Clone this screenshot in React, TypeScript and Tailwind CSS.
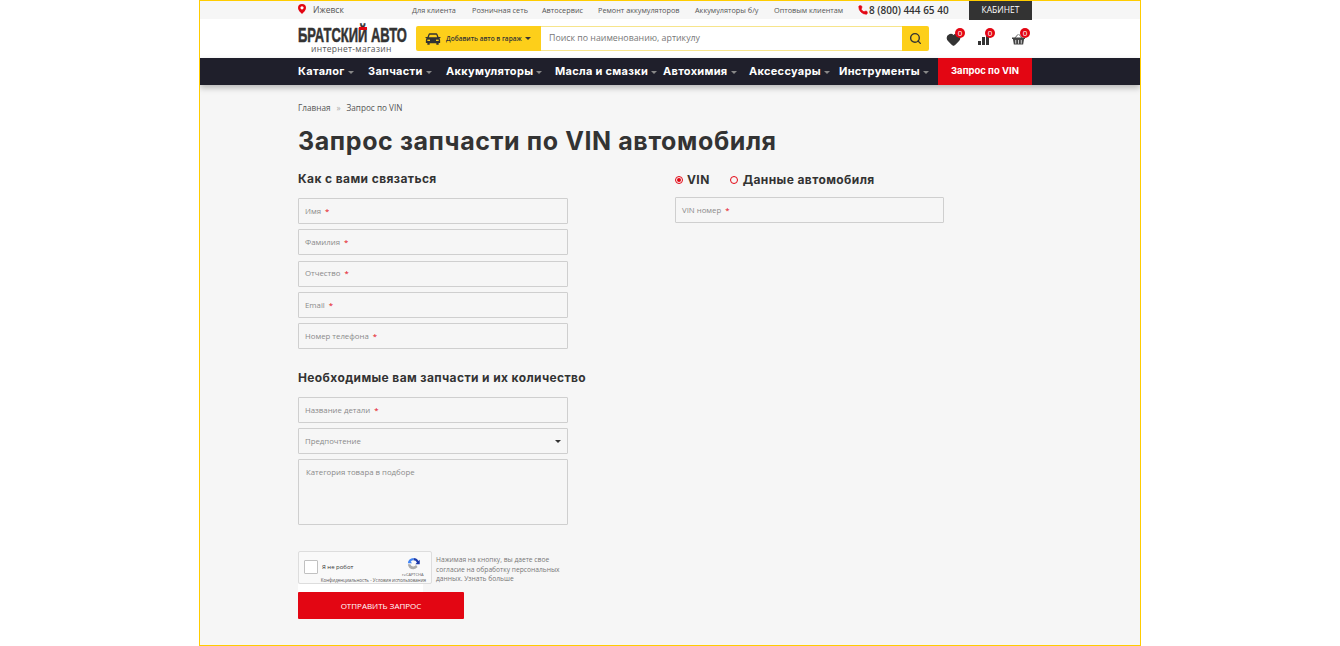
import React from 'react'
import { Phone, Search, Heart } from 'lucide-react'

const heading = "font-['Inter','DejaVu_Sans',sans-serif]"
const body = "font-['Open_Sans','Liberation_Sans',sans-serif]"

const topLinks = [
    { label: 'Для клиента', w: 'w-[60px]' },
    { label: 'Розничная сеть', w: 'w-[70px]' },
    { label: 'Автосервис', w: 'w-[56px]' },
    { label: 'Ремонт аккумуляторов', w: 'w-[97px]' },
    { label: 'Аккумуляторы б/у', w: 'w-[79px]' },
    { label: 'Оптовым клиентам', w: 'w-[84px]' },
]

const navItems = [
    { label: 'Каталог', w: 'w-[70px]' },
    { label: 'Запчасти', w: 'w-[78px]' },
    { label: 'Аккумуляторы', w: 'w-[109px]' },
    { label: 'Масла и смазки', w: 'w-[108px]' },
    { label: 'Автохимия', w: 'w-[86px]' },
    { label: 'Аксессуары', w: 'w-[90px]' },
    { label: 'Инструменты', w: 'w-[99px]' },
]

function Badge() {
    return (
        <span className={`absolute -top-[5px] -right-[5px] flex h-[10px] w-[10px] items-center justify-center rounded-full bg-[#e30613] text-[8px] leading-none text-white ${body}`}>
            0
        </span>
    )
}

function Field({ label, w = 'w-[270px]', mb = 'mb-[5.33px]' }: { label: string; w?: string; mb?: string }) {
    return (
        <div className={`flex h-[26px] items-center rounded-[1px] border border-[#cfcfcf] bg-[#f6f6f6] px-[6px] pt-[1px] text-[7.8px] text-[#8a8a8a] ${w} ${mb}`}>
            {label}
            <span className="ml-[4px] text-[#e30613]">*</span>
        </div>
    )
}

export default function App() {
    return (
        <div className={`mx-auto h-[646px] w-[942px] overflow-hidden border border-[#fc0] bg-[#f6f6f6] ${body}`}>
            <div className="flex h-[18px] items-center bg-[#f6f6f6] pl-[98px] text-[7.3px] text-[#555]">
                <svg viewBox="0 0 8 10" className="-mt-[3px] h-[10px] w-[8px]">
                    <path d="M4 0 A4 4 0 0 1 8 4 C8 6.500 5.300 8.500 4 10 C2.700 8.500 0 6.500 0 4 A4 4 0 0 1 4 0 Z" fill="#e30613" />
                    <circle cx="4" cy="3.800" r="1.600" fill="#fff" />
                </svg>
                <span className="ml-[7px] w-[99px] pt-[1px] text-[8.5px]">Ижевск</span>
                {topLinks.map((l) => (
                    <span key={l.label} className={`whitespace-nowrap pt-[1px] ${l.w}`}>{l.label}</span>
                ))}
                <Phone className="h-[10px] w-[10px] fill-[#e30613] text-[#e30613]" />
                <span className="ml-[1px] w-[100px] whitespace-nowrap pt-[1px] text-[10px] font-semibold text-[#333]">8 (800) 444 65 40</span>
                <div className="flex h-[19px] w-[63px] items-center justify-center bg-[#333] text-[8.5px] text-white">КАБИНЕТ</div>
            </div>

            <div className="flex h-[39px] items-center bg-white pl-[98px]">
                <div className="relative mt-[3px] flex h-[25px] w-[118px] flex-col">
                    <span className="h-[14px] origin-top-left whitespace-nowrap text-[19.5px] font-bold leading-[14px] text-[#333] font-['Liberation_Sans',sans-serif] [-webkit-text-stroke:0.5px_#333] [transform:scaleX(0.665)]">БРАТСКИЙ АВТО</span>
                    <span className="ml-[13px] mt-[3px] whitespace-nowrap text-[8.5px] leading-[8px] tracking-[0.3px] text-[#555]">интернет-магазин</span>
                    <span className="absolute left-[61px] -top-[1px] h-[3px] w-[8px] bg-[#e30613]" />
                </div>
                <div className="flex h-[25px] w-[125px] items-center rounded-l-[2px] bg-[#fdcf1a] pl-[9px]">
                    <svg viewBox="0 0 24 18" className="h-[12px] w-[16px]">
                        <path d="M5 2.500 C5.500 1.200 6.500 0.500 8 0.500 H16 C17.500 0.500 18.500 1.200 19 2.500 L20.300 6 H22.500 C23.300 6 23.600 7 23 7.500 L21.500 8.300 C22.300 9 22.700 10 22.700 11 V15 H20.500 V17.500 H17 V15.500 H7 V17.500 H3.500 V15 H1.300 V11 C1.300 10 1.700 9 2.500 8.300 L1 7.500 C0.400 7 0.700 6 1.500 6 H3.700 Z" fill="#333" />
                        <path d="M7 2.500 H17 L18.300 6.500 H5.700 Z" fill="#fdcf1a" />
                        <rect x="3.500" y="10" width="4" height="2" fill="#fdcf1a" />
                        <rect x="16.500" y="10" width="4" height="2" fill="#fdcf1a" />
                    </svg>
                    <span className="ml-[5px] whitespace-nowrap text-[6.5px] font-semibold text-[#333]">Добавить авто в гараж</span>
                    <span className="ml-[3px] h-0 w-0 border-x-[3.5px] border-t-[3.5px] border-x-transparent border-t-[#333]" />
                </div>
                <div className="flex h-[25px] w-[361px] items-center border-y border-[#f7e58c] bg-white pl-[8px] text-[8.8px] text-[#777]">
                    Поиск по наименованию, артикулу
                </div>
                <div className="flex h-[25px] w-[27px] items-center justify-center rounded-r-[2px] bg-[#fdcf1a]">
                    <Search className="h-[13px] w-[13px] text-[#333]" strokeWidth={2.5} />
                </div>
                <div className="relative ml-[17px] h-[12px] w-[14px]">
                    <Heart className="-mt-[1px] h-[15px] w-[15px] fill-[#333] text-[#333]" />
                    <Badge />
                </div>
                <div className="relative ml-[18px] flex h-[12px] w-[12px] items-end gap-[1px]">
                    <span className="h-[4px] w-[3px] bg-[#333]" />
                    <span className="h-[8px] w-[3px] bg-[#333]" />
                    <span className="h-[12px] w-[3px] bg-[#333]" />
                    <Badge />
                </div>
                <div className="relative ml-[22px] h-[12px] w-[13px]">
                    <svg viewBox="0 0 14 12" className="h-[12px] w-[13px]">
                        <path d="M3 5 L6.500 1 M11 5 L7.500 1" stroke="#555" strokeWidth="1" fill="none" />
                        <path d="M0 4.500 H14 V6 H13 L12 12 H2 L1 6 H0 Z" fill="#444" />
                        <path d="M4 7 V11 M7 7 V11 M10 7 V11" stroke="#fff" strokeWidth="0.8" />
                    </svg>
                    <Badge />
                </div>
            </div>

            <div className={`flex h-[27px] items-stretch bg-[#1f1f2b] pl-[98px] shadow-[0_3px_6px_rgba(0,0,0,0.25)] ${heading}`}>
                {navItems.map((n) => (
                    <div key={n.label} className={`flex items-center whitespace-nowrap text-[11px] font-bold tracking-[0.3px] text-white ${n.w}`}>
                        {n.label}
                        <span className="ml-[3px] mt-[2px] h-0 w-0 border-x-[3px] border-t-[3px] border-x-transparent border-t-[#888]" />
                    </div>
                ))}
                <div className="flex w-[94px] items-center justify-center bg-[#e30613] text-[9.5px] font-bold text-white">Запрос по VIN</div>
            </div>

            <div className="pl-[98px]">
                <div className="mt-[18px] flex items-center text-[8.2px] leading-[10px] text-[#555]">
                    Главная <span className="mx-[6px] text-[#aaa]">»</span> Запрос по VIN
                </div>
                <h1 className={`mt-[12px] text-[25px] font-bold leading-[32px] tracking-[0.6px] text-[#333] ${heading}`}>Запрос запчасти по VIN автомобиля</h1>

                <div className="mt-[14px] flex">
                    <div className="w-[377px]">
                        <h2 className={`mb-[11px] text-[12px] font-bold leading-[16px] tracking-[0.4px] text-[#333] ${heading}`}>Как с вами связаться</h2>
                        <Field label="Имя" />
                        <Field label="Фамилия" />
                        <Field label="Отчество" />
                        <Field label="Email" />
                        <Field label="Номер телефона" mb="mb-0" />
                        <h2 className={`mb-[11px] mt-[21px] text-[12px] font-bold leading-[16px] tracking-[0.38px] text-[#333] ${heading}`}>Необходимые вам запчасти и их количество</h2>
                        <Field label="Название детали" mb="mb-[5px]" />
                        <div className="mb-[5px] flex h-[26px] w-[270px] items-center justify-between rounded-[1px] border border-[#cfcfcf] px-[6px] pt-[1px] text-[7.8px] text-[#8a8a8a]">
                            Предпочтение
                            <span className="h-0 w-0 border-x-[3.5px] border-t-[3.5px] border-x-transparent border-t-[#333]" />
                        </div>
                        <div className="h-[66px] w-[270px] rounded-[1px] border border-[#cfcfcf] px-[7px] py-[6px] text-[7.8px] leading-[12px] text-[#8a8a8a]">
                            Категория товара в подборе
                        </div>
                        <div className="mt-[26px] flex items-start">
                            <div className="relative h-[33px] w-[134px] rounded-[2px] border border-[#ddd] bg-[#f9f9f9]">
                                <span className="absolute left-[5px] top-[8px] h-[14px] w-[14px] rounded-[1px] border border-[#c1c1c1] bg-white" />
                                <span className="absolute left-[23px] top-[11px] text-[6px] leading-[8px] text-[#333]">Я не робот</span>
                                <svg viewBox="0 0 24 24" className="absolute left-[107px] top-[4px] h-[15px] w-[15px]">
                                    <path d="M12 3a9 9 0 0 1 8 5l2-2v7h-7l2.500-2.500A6 6 0 0 0 12 7z" fill="#1c3aa9" />
                                    <path d="M3 12a9 9 0 0 1 9-9v4a6 6 0 0 0-4.500 2L10 11.500H3z" fill="#4285f4" />
                                    <path d="M12 21a9 9 0 0 1-9-8h4a5 5 0 0 0 9 1.500l2.500 3A9 9 0 0 1 12 21z" fill="#ababab" />
                                </svg>
                                <span className="absolute left-[103px] top-[20px] text-[4px] leading-[5px] text-[#555]">reCAPTCHA</span>
                                <span className="absolute right-[5px] top-[26px] whitespace-nowrap text-[4.5px] leading-[5px] text-[#555]">Конфиденциальность - Условия использования</span>
                            </div>
                            <p className="ml-[4px] mt-[4px] w-[128px] text-[6.7px] leading-[9.500px] text-[#777]">
                                Нажимая на кнопку, вы даете свое согласие на обработку персональных данных. Узнать больше
                            </p>
                        </div>
                        <div className="h-[8px] w-[125px] bg-white" />
                        <button className="flex h-[27px] w-[166px] items-center justify-center rounded-[1px] bg-[#e30613] text-[8px] text-white">ОТПРАВИТЬ ЗАПРОС</button>
                    </div>
                    <div className="mt-[1px]">
                        <div className={`mb-[9px] flex items-center text-[12px] font-bold leading-[16px] tracking-[0.4px] text-[#333] ${heading}`}>
                            <span className="flex h-[8px] w-[8px] items-center justify-center rounded-full border border-[#e30613]">
                                <span className="h-[4px] w-[4px] rounded-full bg-[#e30613]" />
                            </span>
                            <span className="ml-[4px]">VIN</span>
                            <span className="ml-[20px] h-[8px] w-[8px] rounded-full border border-[#e30613]" />
                            <span className="ml-[5px]">Данные автомобиля</span>
                        </div>
                        <Field label="VIN номер" w="w-[269px]" />
                    </div>
                </div>
            </div>
        </div>
    )
}
